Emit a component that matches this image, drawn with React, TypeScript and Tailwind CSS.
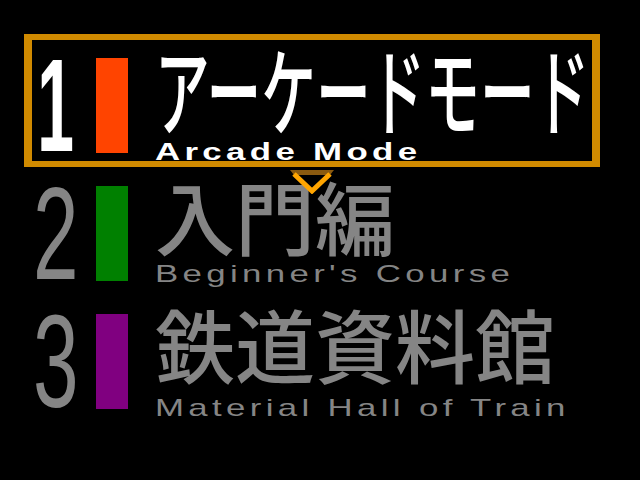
import React from "react";

interface MenuItem {
  num: string;
  bar: string;
  jp: string;
  jpClass: string;
  en: string;
  enClass: string;
}

const items: MenuItem[] = [
  {
    num: "1",
    bar: "bg-[#ff4400]",
    jp: "アーケードモード",
    jpClass: "-mt-[1px] text-[96px] text-white scale-x-[0.57]",
    en: "Arcade Mode",
    enClass: "mt-[5px] font-bold text-white",
  },
  {
    num: "2",
    bar: "bg-[#008000]",
    jp: "入門編",
    jpClass: "mt-[6px] text-[80px] text-[#858585]",
    en: "Beginner's Course",
    enClass: "mt-[8px] text-[#858585]",
  },
  {
    num: "3",
    bar: "bg-[#800080]",
    jp: "鉄道資料館",
    jpClass: "mt-[6px] text-[80px] text-[#858585]",
    en: "Material Hall of Train",
    enClass: "mt-[14px] text-[#858585]",
  },
];

function Chevron() {
  return (
    <svg
      className="absolute left-[290px] top-[170px]"
      width="44"
      height="24"
      viewBox="0 0 44 24"
    >
      <polygon points="0,0 44,0 40,5 4,5" fill="#8a5a10" />
      <polyline
        points="4,4 22,21 40,4"
        fill="none"
        stroke="#ffa500"
        strokeWidth="5"
      />
    </svg>
  );
}

export default function App() {
  return (
    <div className="relative w-[640px] h-[480px] bg-black overflow-hidden">
      <div className="flex flex-col pt-[34px] pl-[24px]">
        {items.map((item, i) => {
          const active = i === 0;
          return (
            <div
              key={item.num}
              className={
                active
                  ? "w-[576px] h-[133px] -mb-[5px] border-x-[8px] border-y-[6px] border-[#d08a00] flex items-start"
                  : "w-[576px] h-[133px] -mb-[5px] border-x-[8px] border-y-[6px] border-transparent flex items-start"
              }
            >
              {/* number */}
              <div className="w-[48px] flex justify-center">
                <span
                  className={
                    active
                      ? "inline-block text-[132px] leading-none font-bold text-white scale-x-[0.5]"
                      : "inline-block text-[132px] leading-none text-[#858585] scale-x-[0.62]"
                  }
                  style={{ fontFamily: '"Liberation Sans", Arial, sans-serif' }}
                >
                  {item.num}
                </span>
              </div>

              {/* colour bar */}
              <div className={`ml-[16px] mt-[18px] w-[32px] h-[95px] shrink-0 ${item.bar}`} />

              {/* titles */}
              <div className="ml-[27px] flex flex-col">
                <span
                  className={`block origin-left whitespace-nowrap leading-none font-medium ${item.jpClass}`}
                  style={{ fontFamily: '"Noto Sans CJK JP", sans-serif' }}
                >
                  {item.jp}
                </span>
                <span
                  className={`block origin-left whitespace-nowrap text-[24px] leading-none tracking-[3px] scale-x-[1.45] ${item.enClass}`}
                  style={{ fontFamily: '"Liberation Sans", Arial, sans-serif' }}
                >
                  {item.en}
                </span>
              </div>
            </div>
          );
        })}
      </div>
      <Chevron />
    </div>
  );
}
